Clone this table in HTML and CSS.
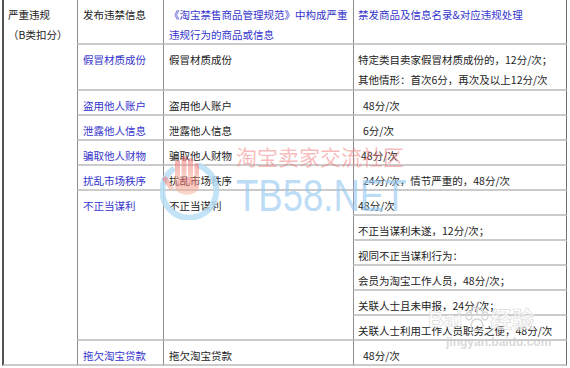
FILE: index.html
```html
<!DOCTYPE html>
<html lang="zh-CN">
<head>
<meta charset="utf-8">
<title>严重违规（B类扣分）</title>
<link rel="stylesheet" href="styles.css">
</head>
<body>
<div class="page">
  <div class="sheet">
    <div class="cell first">严重违规<br>（B类扣分）</div>

    <div class="cell">发布违禁信息</div>
    <div class="cell link">《淘宝禁售商品管理规范》中构成严重<br>违规行为的商品或信息</div>
    <div class="cell last link">禁发商品及信息名录&amp;对应违规处理</div>

    <div class="cell link">假冒材质成份</div>
    <div class="cell">假冒材质成份</div>
    <div class="cell last">特定类目卖家假冒材质成份的，12分/次；<br>其他情形：首次6分，再次及以上12分/次</div>

    <div class="cell link">盗用他人账户</div>
    <div class="cell">盗用他人账户</div>
    <div class="cell last indent">48分/次</div>

    <div class="cell link">泄露他人信息</div>
    <div class="cell">泄露他人信息</div>
    <div class="cell last indent">6分/次</div>

    <div class="cell link">骗取他人财物</div>
    <div class="cell">骗取他人财物</div>
    <div class="cell last indent-s">48分/次</div>

    <div class="cell link">扰乱市场秩序</div>
    <div class="cell">扰乱市场秩序</div>
    <div class="cell last indent">24分/次，情节严重的，48分/次</div>

    <div class="cell link tall">不正当谋利</div>
    <div class="cell tall">不正当谋利</div>
    <div class="cell last">48分/次</div>
    <div class="cell last">不正当谋利未遂，12分/次；</div>
    <div class="cell last">视同不正当谋利行为：</div>
    <div class="cell last">会员为淘宝工作人员，48分/次；</div>
    <div class="cell last">关联人士且未申报，24分/次；</div>
    <div class="cell last">关联人士利用工作人员职务之便，48分/次</div>

    <div class="cell link">拖欠淘宝贷款</div>
    <div class="cell">拖欠淘宝贷款</div>
    <div class="cell last indent">48分/次</div>
  </div>

  <svg class="logo" width="60" height="66" viewBox="0 0 60 66" aria-hidden="true">
    <defs>
      <linearGradient id="hand" x1="0" y1="0" x2="0" y2="1">
        <stop offset="0" stop-color="#f06a6a"/>
        <stop offset="1" stop-color="#f8c2a8"/>
      </linearGradient>
    </defs>
    <path d="M40 12 A27 27 0 1 1 12 16" fill="none" stroke="#b9def6" stroke-width="6" stroke-linecap="round" opacity="0.85"/>
    <g fill="url(#hand)" opacity="0.55">
      <rect x="15" y="6" width="5" height="24" rx="2.5"/>
      <rect x="21.5" y="2" width="5" height="27" rx="2.5"/>
      <rect x="28" y="4" width="5" height="25" rx="2.5"/>
      <rect x="34.5" y="9" width="4.5" height="21" rx="2.2"/>
      <ellipse cx="27" cy="32" rx="12" ry="9"/>
      <rect x="6" y="22" width="5" height="16" rx="2.5" transform="rotate(-35 8 30)"/>
    </g>
  </svg>
  <div class="mark-cn">淘宝卖家交流社区</div>
  <div class="mark-en">TB58.NET</div>

  <div class="baidu">
    <span class="bd">Bai</span>
    <svg class="paw" width="26" height="26" viewBox="0 0 26 26" aria-hidden="true">
      <g fill="none" stroke="#d6d6d6" stroke-width="1.5">
        <ellipse cx="6" cy="9" rx="3" ry="4"/>
        <ellipse cx="11" cy="4.5" rx="3" ry="4"/>
        <ellipse cx="17" cy="4.5" rx="3" ry="4"/>
        <ellipse cx="22" cy="9" rx="3" ry="4"/>
        <path d="M8 21 C8 14 11 12 14 12 C17 12 20 14 20 21 C20 24 8 24 8 21 Z"/>
      </g>
    </svg>
    <span class="bd">经验</span>
    <div class="bd-url">jingyan.baidu.com</div>
  </div>
</div>
</body>
</html>
```

FILE: styles.css
```css
* { box-sizing: border-box; }

html, body {
  margin: 0;
  padding: 0;
  background: #ffffff;
}

.page {
  position: relative;
  width: 570px;
  height: 368px;
  overflow: hidden;
}

.sheet {
  display: grid;
  grid-template-columns: 75px 86px 190px 214px;
  grid-template-rows: 45px 46px repeat(11, 25px);
  margin-left: 2px;
  font-family: "Noto Sans CJK SC", "Noto Sans", sans-serif;
  font-size: 10.5px;
  line-height: 20px;
  color: #222222;
}

.cell {
  border-left: 1px solid #8e8e8e;
  border-bottom: 2px solid #cbcbcb;
  padding: 5px 0 0 5px;
  white-space: nowrap;
  overflow: hidden;
}

.first {
  grid-row: span 13;
  border-left: 2px solid #555555;
  padding-left: 4px;
}

.last {
  border-right: 1px solid #6f6f6f;
  padding-left: 4px;
}

.tall {
  grid-row: span 6;
}

.link {
  color: #3434cc;
}

.indent { padding-left: 9px; }
.indent-s { padding-left: 7px; }

.logo {
  position: absolute;
  left: 160px;
  top: 154px;
}

.mark-cn {
  position: absolute;
  left: 236px;
  top: 143px;
  font-family: "Noto Sans CJK SC", sans-serif;
  font-size: 21px;
  line-height: 26px;
  color: rgba(240, 120, 120, 0.5);
  white-space: nowrap;
}

.mark-en {
  position: absolute;
  left: 236px;
  top: 174px;
  font-family: "Liberation Sans", Arial, sans-serif;
  font-size: 44px;
  line-height: 44px;
  color: rgba(150, 200, 242, 0.65);
  transform: scaleX(0.83);
  transform-origin: left top;
  white-space: nowrap;
}

.baidu {
  position: absolute;
  left: 428px;
  top: 306px;
  display: flex;
  align-items: center;
  flex-wrap: wrap;
  width: 140px;
  color: rgba(215, 215, 215, 0.7);
  font-family: "Liberation Sans", "Noto Sans CJK SC", sans-serif;
  font-weight: bold;
}

.bd {
  font-size: 22px;
  line-height: 28px;
  -webkit-text-stroke: 0.6px #d8d8d8;
  color: rgba(255, 255, 255, 0.6);
}

.paw { margin: 0 1px; }

.bd-url {
  width: 100%;
  padding-left: 18px;
  font-size: 12px;
  line-height: 16px;
  color: rgba(205, 205, 205, 0.75);
}
```
